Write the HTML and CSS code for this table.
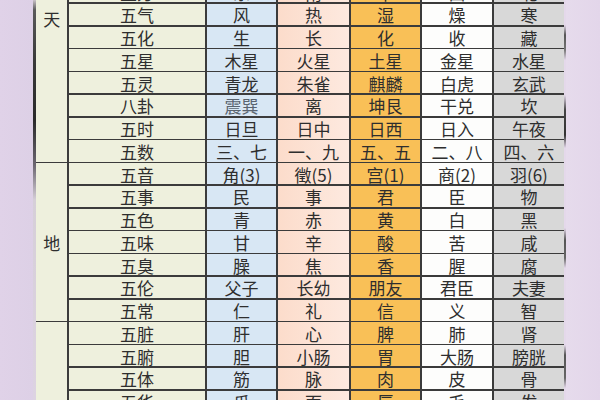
FILE: index.html
```html
<!DOCTYPE html>
<html lang="zh-CN">
<head>
<meta charset="utf-8">
<title>五行对应表</title>
<link rel="stylesheet" href="styles.css">
</head>
<body>
<div class="page">
  <div class="side side-left"></div>
  <div class="shade shade-left"></div>
  <div class="table">
    <div class="g g-tian">天</div>
    <div class="l">五方</div><div class="c c1">东</div><div class="c c2">南</div><div class="c c3">中</div><div class="c c4">西</div><div class="c c5">北</div>
    <div class="l">五气</div><div class="c c1">风</div><div class="c c2">热</div><div class="c c3">湿</div><div class="c c4">燥</div><div class="c c5">寒</div>
    <div class="l">五化</div><div class="c c1">生</div><div class="c c2">长</div><div class="c c3">化</div><div class="c c4">收</div><div class="c c5">藏</div>
    <div class="l">五星</div><div class="c c1">木星</div><div class="c c2">火星</div><div class="c c3">土星</div><div class="c c4">金星</div><div class="c c5">水星</div>
    <div class="l">五灵</div><div class="c c1">青龙</div><div class="c c2">朱雀</div><div class="c c3">麒麟</div><div class="c c4">白虎</div><div class="c c5">玄武</div>
    <div class="l">八卦</div><div class="c c1 faint">震巽</div><div class="c c2">离</div><div class="c c3">坤艮</div><div class="c c4">干兑</div><div class="c c5">坎</div>
    <div class="l">五时</div><div class="c c1">日旦</div><div class="c c2">日中</div><div class="c c3">日西</div><div class="c c4">日入</div><div class="c c5">午夜</div>
    <div class="l">五数</div><div class="c c1">三、七</div><div class="c c2">一、九</div><div class="c c3">五、五</div><div class="c c4">二、八</div><div class="c c5">四、六</div>

    <div class="g g-di">地</div>
    <div class="l">五音</div><div class="c c1">角(3)</div><div class="c c2">徵(5)</div><div class="c c3">宫(1)</div><div class="c c4">商(2)</div><div class="c c5">羽(6)</div>
    <div class="l">五事</div><div class="c c1">民</div><div class="c c2">事</div><div class="c c3">君</div><div class="c c4">臣</div><div class="c c5">物</div>
    <div class="l">五色</div><div class="c c1">青</div><div class="c c2">赤</div><div class="c c3">黄</div><div class="c c4">白</div><div class="c c5">黑</div>
    <div class="l">五味</div><div class="c c1">甘</div><div class="c c2">辛</div><div class="c c3">酸</div><div class="c c4">苦</div><div class="c c5">咸</div>
    <div class="l">五臭</div><div class="c c1">臊</div><div class="c c2">焦</div><div class="c c3">香</div><div class="c c4">腥</div><div class="c c5">腐</div>
    <div class="l">五伦</div><div class="c c1">父子</div><div class="c c2">长幼</div><div class="c c3">朋友</div><div class="c c4">君臣</div><div class="c c5">夫妻</div>
    <div class="l">五常</div><div class="c c1">仁</div><div class="c c2">礼</div><div class="c c3">信</div><div class="c c4">义</div><div class="c c5">智</div>

    <div class="g g-ren"></div>
    <div class="l">五脏</div><div class="c c1">肝</div><div class="c c2">心</div><div class="c c3">脾</div><div class="c c4">肺</div><div class="c c5">肾</div>
    <div class="l">五腑</div><div class="c c1">胆</div><div class="c c2">小肠</div><div class="c c3">胃</div><div class="c c4">大肠</div><div class="c c5">膀胱</div>
    <div class="l">五体</div><div class="c c1">筋</div><div class="c c2">脉</div><div class="c c3">肉</div><div class="c c4">皮</div><div class="c c5">骨</div>
    <div class="l">五华</div><div class="c c1">爪</div><div class="c c2">面</div><div class="c c3">唇</div><div class="c c4">毛</div><div class="c c5">发</div>
  </div>
  <div class="shade shade-right"></div>
  <div class="side side-right"></div>
</div>
</body>
</html>
```
FILE: styles.css
```css
html, body {
  margin: 0;
  padding: 0;
}
body {
  width: 600px;
  height: 400px;
  overflow: hidden;
  background: #e2d5e9;
  font-family: "Noto Sans CJK SC", "Noto Sans", sans-serif;
  color: #2e2e2e;
}
.page {
  display: flex;
  height: 400px;
  overflow: hidden;
}
.side-left {
  width: 33px;
  background: linear-gradient(90deg, #e0d2e8, #ddd0e6);
}
.side-right {
  flex: 1;
  background: linear-gradient(90deg, #e6dbec, #e3d6ea);
}
.shade {
  width: 3px;
}
.shade-left {
  background: linear-gradient(180deg,
    #c9c2c8 0px, #5a5a5a 10px, #3a3a3a 60px, #2a2a2a 120px,
    #6b6670 165px, #d6cfd8 200px, #ddd3e2 400px);
}
.shade-right {
  width: 2px;
  background: linear-gradient(180deg,
    #e4d8ea 0px, #e4d8ea 25px, #555 35px, #777 50px, #e4d8ea 60px,
    #e4d8ea 95px, #444 110px, #333 135px, #e4d8ea 148px,
    #e4d8ea 228px, #555 240px, #666 258px, #e4d8ea 268px,
    #e4d8ea 345px, #555 355px, #666 378px, #e4d8ea 388px);
}
.table {
  width: 528px;
  margin-top: -19px;
  display: grid;
  grid-template-columns: 31.25px 136.5px 69.5px 71.5px 69.5px 70.5px 70.25px;
  grid-auto-rows: 21.26px;
  gap: 1.5px;
  background: #3b3b3b;
  align-self: flex-start;
}
.table > div {
  display: flex;
  align-items: center;
  justify-content: center;
  font-size: 17px;
  line-height: 20px;
  padding-top: 2px;
  box-sizing: border-box;
  white-space: nowrap;
}
.g {
  grid-column: 1;
  background: #eef0dd;
}
.g-tian {
  grid-row: 1 / span 8;
  align-items: flex-start !important;
  padding-top: 28px !important;
}
.g-di {
  grid-row: 9 / span 7;
}
.g-ren {
  grid-row: 16 / span 4;
}
.l {
  background: #eef0dd;
}
.c1 {
  background: #d8e7f4;
}
.c2 {
  background: linear-gradient(90deg, #fcdccb, #fde9df);
}
.c3 {
  background: #f9c057;
}
.c4 {
  background: #fdfdfc;
}
.c5 {
  background: #d8d8d8;
}
.faint {
  color: #5a6470;
}
```
